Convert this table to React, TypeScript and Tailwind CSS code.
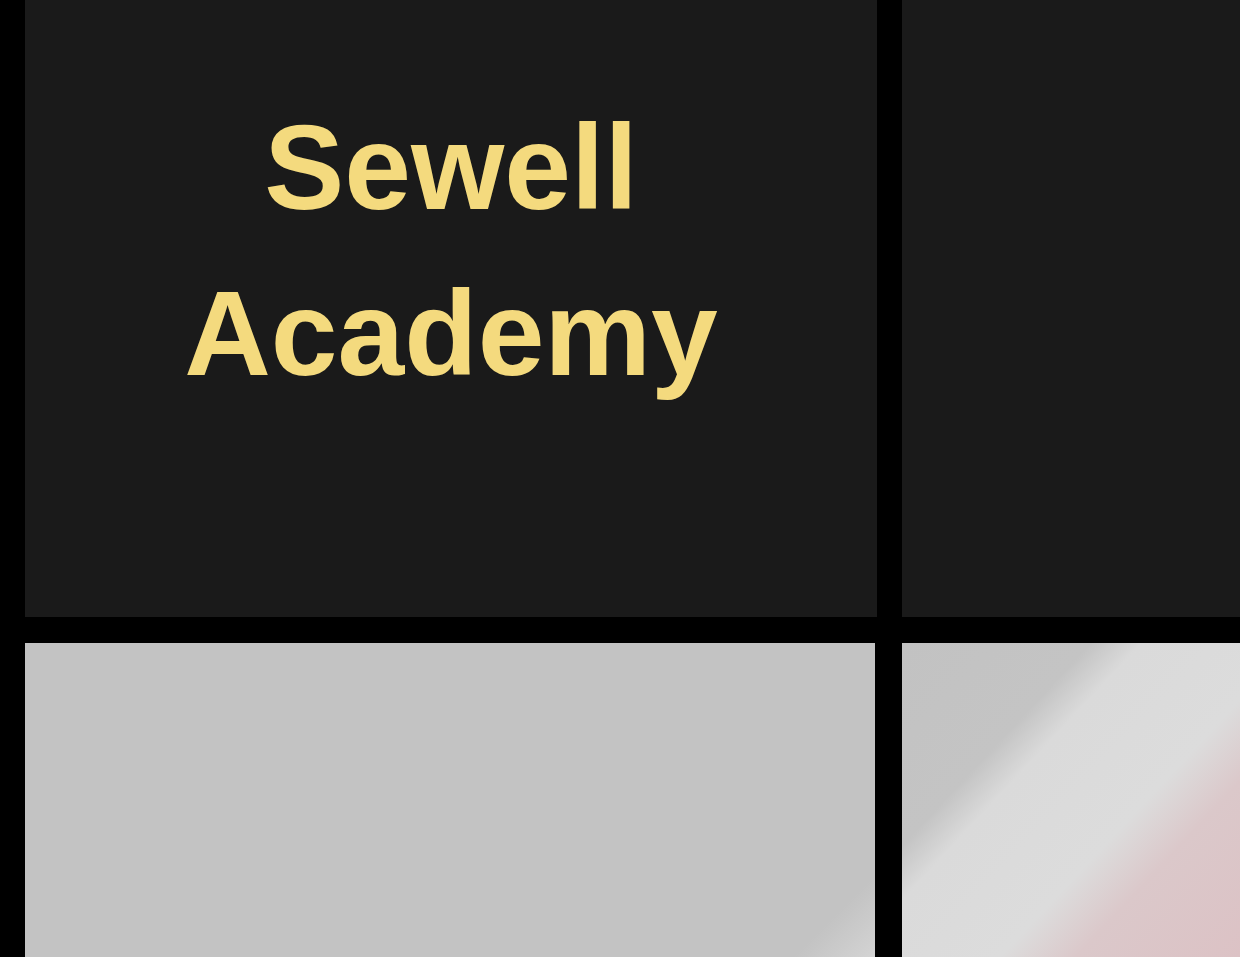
export default function App() {
  return (
    <div className="h-[957px] w-full overflow-hidden bg-black pl-[25px]">
      <div className="grid grid-cols-[852px_1fr] gap-x-[25px] gap-y-[26px] grid-rows-[617px_1fr] h-full">
        <div className="bg-[#1a1a1a] pt-[84px]">
          <h1 className="text-center font-bold text-[120px] leading-[166px] text-[#f4da7e] [font-family:'Liberation_Sans',Arial,sans-serif]">
            Sewell
            <br />
            Academy
          </h1>
        </div>
        <div className="bg-[#1a1a1a]" />
        <div className="bg-[linear-gradient(135deg,#c3c3c3_0%,#c3c3c3_93%,#d4d4d4_100%)] mr-[2px]" />
        <div className="bg-[linear-gradient(133deg,#c2c2c2_0%,#c4c4c4_30%,#dadada_38%,#dcdcdc_62%,#dbc8ca_74%,#dcc2c5_100%)]" />
      </div>
    </div>
  );
}
